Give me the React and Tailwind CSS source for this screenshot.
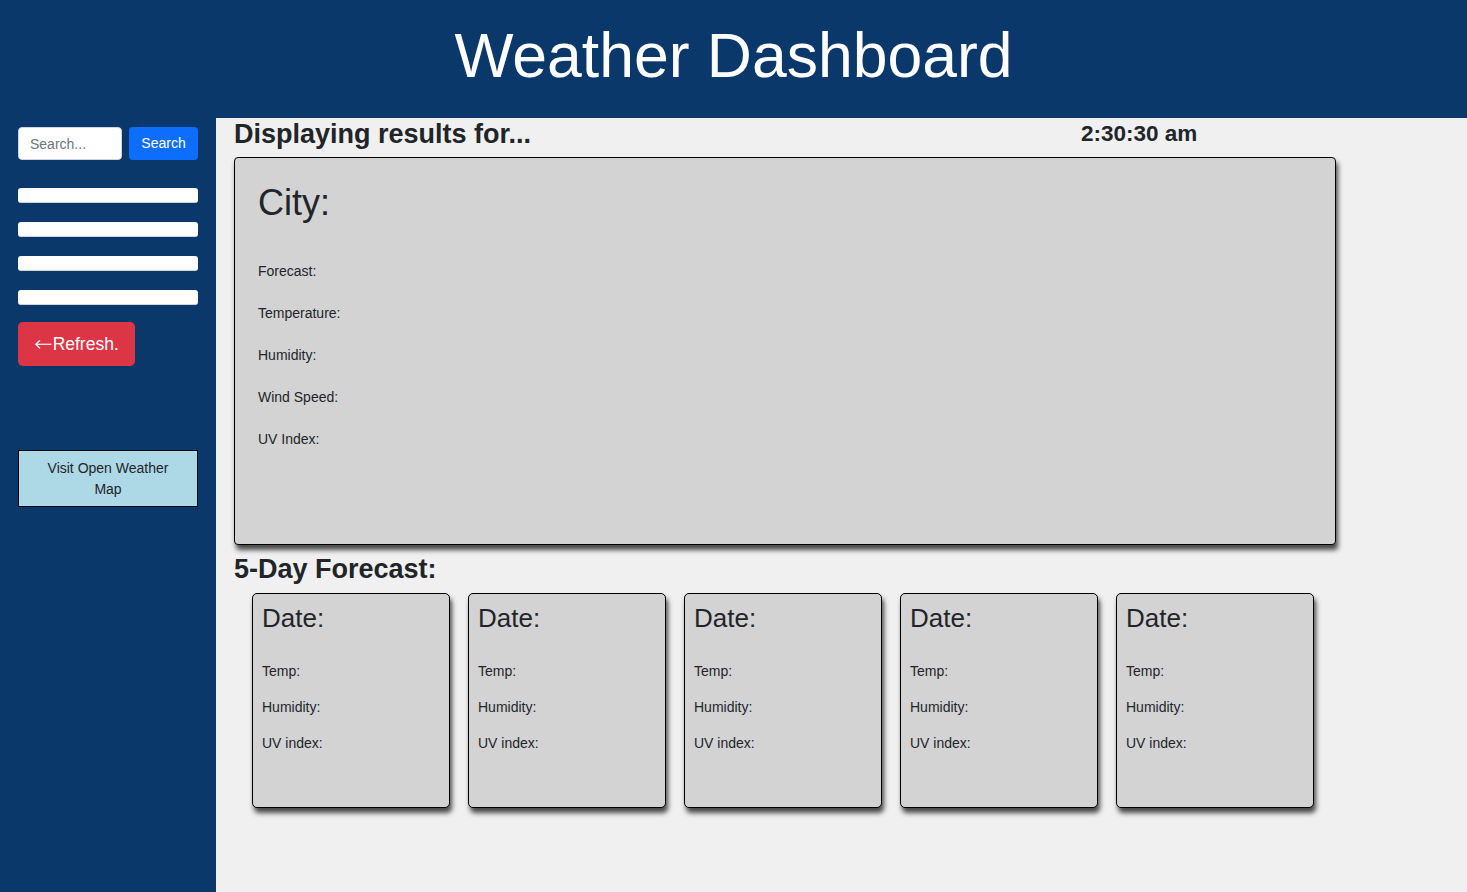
import { useState } from 'react'

const FIELDS = ['Forecast:', 'Temperature:', 'Humidity:', 'Wind Speed:', 'UV Index:']
const DAYS = [0, 1, 2, 3, 4]

function DayCard() {
  return (
    <div className="w-[198px] h-[215px] bg-[#d3d3d3] border border-black rounded-[5px] shadow-[2px_5px_5px_rgba(0,0,0,0.7)] pl-[9px] pt-[11px]">
      <h4 className="text-[26px] leading-none">Date:</h4>
      <div className="mt-[22px] text-[14px]">
        <p className="leading-[36px]">Temp:</p>
        <p className="leading-[36px]">Humidity:</p>
        <p className="leading-[36px]">UV index:</p>
      </div>
    </div>
  )
}

export default function App() {
  const [query, setQuery] = useState('')

  return (
    <div className="min-h-screen flex flex-col font-['Liberation_Sans',Arial,sans-serif] text-[#212529]">
      {/* Header */}
      <header className="h-[118px] bg-[#0b386b] flex justify-center pt-[24px]">
        <h1 className="text-[62.5px] leading-none text-white">Weather Dashboard</h1>
      </header>

      <div className="flex flex-1">
        {/* Sidebar */}
        <aside className="w-[216px] bg-[#0b386b] px-[18px] pt-[9px] flex flex-col">
          <div className="flex gap-[7px]">
            <input
              value={query}
              onChange={e => setQuery(e.target.value)}
              placeholder="Search..."
              className="w-[104px] h-[33px] rounded-[4px] border border-[#ced4da] bg-white px-[11px] text-[14px] placeholder:text-[#6c757d] outline-none"
            />
            <button className="w-[69px] h-[33px] rounded-[4px] bg-[#0d6efd] text-white text-[14px]">
              Search
            </button>
          </div>

          <div className="mt-[28px] flex flex-col gap-[19px]">
            {[0, 1, 2, 3].map(i => (
              <div key={i} className="h-[15px] bg-white rounded-[3px] border-b border-[#d0d4d8]" />
            ))}
          </div>

          <button className="mt-[17px] w-[117px] h-[44px] bg-[#dc3545] rounded-[5px] text-white text-[17.5px] flex items-center justify-center">
            <span className="font-['DejaVu_Sans',sans-serif] text-[22px] leading-none font-light">←</span>Refresh.
          </button>

          <a className="mt-[84px] w-[180px] h-[57px] bg-[#add8e6] border border-black px-[20px] text-[14px] leading-[21px] text-center flex items-center justify-center text-[#212529]">
            Visit Open Weather Map
          </a>
        </aside>

        {/* Main */}
        <main className="flex-1 bg-[#f0f0f0] pl-[18px] pb-[80px]">
          <div className="h-[32px] flex items-center font-bold">
            <h3 className="w-[847px] text-[27px] leading-none">Displaying results for...</h3>
            <span className="text-[22.5px] leading-none mt-[1px]">2:30:30 am</span>
          </div>

          <section className="mt-[7px] w-[1102px] h-[388px] bg-[#d3d3d3] border border-black rounded-[4px] shadow-[2px_5px_5px_rgba(0,0,0,0.7)] pl-[23px] pt-[27px]">
            <h2 className="text-[36px] leading-none">City:</h2>
            <div className="mt-[29px] text-[14px]">
              {FIELDS.map(f => (
                <p key={f} className="leading-[42px]">{f}</p>
              ))}
            </div>
          </section>

          <h3 className="mt-[11px] text-[27px] leading-none font-bold">5-Day Forecast:</h3>

          <div className="mt-[10px] pl-[18px] flex gap-[18px]">
            {DAYS.map(d => (
              <DayCard key={d} />
            ))}
          </div>
        </main>
      </div>
    </div>
  )
}
